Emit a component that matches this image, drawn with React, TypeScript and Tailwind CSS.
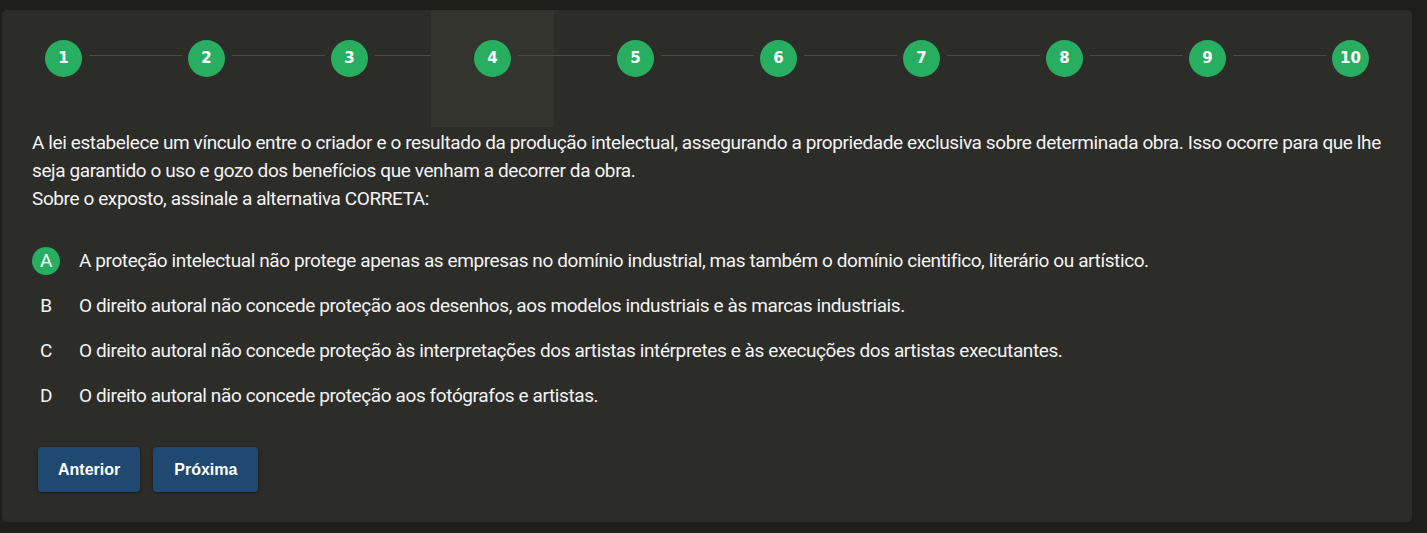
import React from "react";

const steps = [1, 2, 3, 4, 5, 6, 7, 8, 9, 10];

const options = [
  {
    key: "A",
    text: "A proteção intelectual não protege apenas as empresas no domínio industrial, mas também o domínio cientifico, literário ou artístico.",
    selected: true,
  },
  {
    key: "B",
    text: "O direito autoral não concede proteção aos desenhos, aos modelos industriais e às marcas industriais.",
  },
  {
    key: "C",
    text: "O direito autoral não concede proteção às interpretações dos artistas intérpretes e às execuções dos artistas executantes.",
  },
  {
    key: "D",
    text: "O direito autoral não concede proteção aos fotógrafos e artistas.",
  },
];

const bodyFont = "font-['Roboto','Liberation_Sans',sans-serif]";

export default function App() {
  const current = 4;

  return (
    <div className="min-h-[533px] bg-[#1e1e1d] pt-[10px] pl-[2px]">
      <div className="w-[1410px] h-[512px] rounded-[5px] bg-[#2c2c28] flex flex-col">
        {/* Stepper */}
        <div className="flex justify-between">
          {steps.map((n) => (
            <div
              key={n}
              className={`relative w-[123px] h-[117px] pt-[30px] flex justify-center ${
                n === current ? "bg-[#34342f]" : ""
              }`}
            >
              <div className="w-[37px] h-[37px] rounded-full bg-[#27ae60] flex items-center justify-center text-white text-[15px] font-bold font-['DejaVu_Sans',sans-serif]">
                {n}
              </div>
              {n < 10 && (
                <span className="absolute top-[45px] left-[calc(50%+25px)] w-[93px] h-px bg-[#4a4a44]" />
              )}
            </div>
          ))}
        </div>

        {/* Question */}
        <div className={`pl-[30px] pr-[24px] pt-[2px] text-[#f4f4f4] ${bodyFont} text-[19px] tracking-[-0.4px] leading-[28px]`}>
          <p>
            A lei estabelece um vínculo entre o criador e o resultado da produção intelectual, assegurando a
            propriedade exclusiva sobre determinada obra. Isso ocorre para que lhe seja garantido o uso e gozo dos
            benefícios que venham a decorrer da obra.
            <br />
            Sobre o exposto, assinale a alternativa CORRETA:
          </p>

          <ul className="mt-[25px]">
            {options.map((o) => (
              <li key={o.key} className="h-[45px] flex items-center gap-[19px]">
                <span
                  className={`w-[28px] h-[28px] shrink-0 rounded-full flex items-center justify-center ${
                    o.selected ? "bg-[#27ae60] text-white" : ""
                  }`}
                >
                  {o.key}
                </span>
                <span>{o.text}</span>
              </li>
            ))}
          </ul>

          <div className="mt-[29px] ml-[6px] flex gap-[13px] font-['Liberation_Sans',Arial,sans-serif] tracking-normal">
            <button className="h-[45px] px-[20px] rounded-[4px] bg-[#1f4970] text-white text-[16px] font-bold shadow-[0_1px_3px_rgba(0,0,0,0.45)]">
              Anterior
            </button>
            <button className="h-[45px] px-[21px] rounded-[4px] bg-[#1f4970] text-white text-[16px] font-bold shadow-[0_1px_3px_rgba(0,0,0,0.45)]">
              Próxima
            </button>
          </div>
        </div>
      </div>
    </div>
  );
}
